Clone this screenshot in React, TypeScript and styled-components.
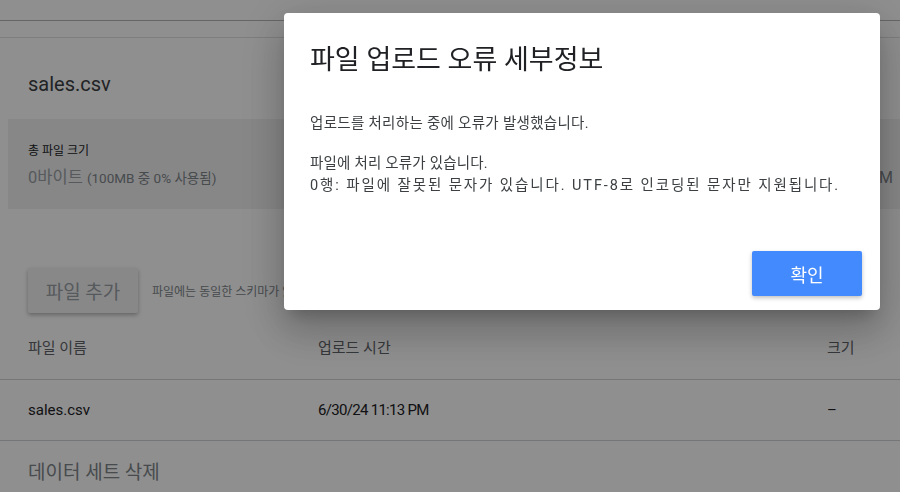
import * as React from "react";
import styled, { createGlobalStyle } from "styled-components";

const GlobalStyle = createGlobalStyle`
  html, body {
    margin: 0;
    padding: 0;
    background: #ffffff;
    font-family: Roboto, "Noto Sans CJK KR", "Noto Sans", sans-serif;
    overflow: hidden;
  }
`;

const App: React.FC = () => {
  return (
    <>
      <GlobalStyle />
      <Page>
        <TopBar />
        <TabStrip />
        <Content>
          <DatasetName>sales.csv</DatasetName>
          <StatCard>
            <StatBlock>
              <StatLabel>총 파일 크기</StatLabel>
              <StatValue>
                0바이트 <StatNote>(100MB 중 0% 사용됨)</StatNote>
              </StatValue>
            </StatBlock>
            <StatTail>M</StatTail>
          </StatCard>
          <AddRow>
            <RaisedButton>파일 추가</RaisedButton>
            <Hint>파일에는 동일한 스키마가 있어야 합니다.</Hint>
          </AddRow>
        </Content>
        <Table>
          <HeadRow>
            <Cell>파일 이름</Cell>
            <Cell>업로드 시간</Cell>
            <Cell>크기</Cell>
          </HeadRow>
          <BodyRow>
            <Cell $dark>sales.csv</Cell>
            <Cell $dark $narrow>6/30/24 11:13 PM</Cell>
            <Cell $dark>–</Cell>
          </BodyRow>
        </Table>
        <DeleteLink>데이터 세트 삭제</DeleteLink>
      </Page>
      <Scrim />
      <Dialog role="dialog" aria-labelledby="dlg-title">
        <DialogTitle id="dlg-title">파일 업로드 오류 세부정보</DialogTitle>
        <DialogBody>
          <Para>
            <Line $tracking={0.3}>업로드를 처리하는 중에 오류가 발생했습니다.</Line>
          </Para>
          <Para>
            <Line $tracking={0.2}>파일에 처리 오류가 있습니다.</Line>
            <Line $tracking={1.9}>
              0행: 파일에 잘못된 문자가 있습니다. UTF-8로 인코딩된 문자만 지원됩니다.
            </Line>
          </Para>
        </DialogBody>
        <DialogActions>
          <PrimaryButton>확인</PrimaryButton>
        </DialogActions>
      </Dialog>
    </>
  );
};

const Page = styled.div`
  width: 900px;
  height: 492px;
  background: #ffffff;
  display: flex;
  flex-direction: column;
`;

const TopBar = styled.div`
  height: 20px;
  border-bottom: 1px solid #b4b6b9;
`;

const TabStrip = styled.div`
  height: 16px;
  border-bottom: 1px solid #e0e0e0;
`;

const Content = styled.div`
  padding: 0 0 0 8px;
  display: flex;
  flex-direction: column;
`;

const DatasetName = styled.div`
  padding: 33px 20px 0;
  height: 81px;
  box-sizing: border-box;
  font-size: 20px;
  line-height: 26px;
  color: #3c4043;
`;

const StatCard = styled.div`
  height: 90px;
  background: #f1f1f2;
  display: flex;
  justify-content: space-between;
  align-items: center;
  padding: 0 7px 0 20px;
`;

const StatBlock = styled.div`
  display: flex;
  flex-direction: column;
  gap: 9px;
  padding-top: 2px;
`;

const StatLabel = styled.div`
  font-size: 12px;
  line-height: 16px;
  color: #202124;
`;

const StatValue = styled.div`
  font-size: 16.5px;
  line-height: 20px;
  color: #9aa0a6;
`;

const StatNote = styled.span`
  font-size: 13.5px;
  color: #80868b;
`;

const StatTail = styled.div`
  font-size: 16px;
  color: #80868b;
  padding-top: 26px;
`;

const AddRow = styled.div`
  display: flex;
  align-items: center;
  gap: 14px;
  padding: 59px 20px 0;
`;

const RaisedButton = styled.button`
  width: 110px;
  height: 45px;
  border: none;
  border-radius: 2px;
  background: #f3f3f3;
  box-shadow: 0 2px 4px rgba(0, 0, 0, 0.3);
  font-family: inherit;
  font-size: 19px;
  color: #9aa0a6;
  padding: 0;
`;

const Hint = styled.div`
  font-size: 12px;
  color: #80868b;
  white-space: nowrap;
`;

const Table = styled.div`
  display: flex;
  flex-direction: column;
`;

const HeadRow = styled.div`
  display: grid;
  grid-template-columns: 290px 509px 1fr;
  height: 66px;
  align-items: center;
  padding: 0 0 0 28px;
  border-bottom: 1px solid #d0d2d4;
`;

const BodyRow = styled(HeadRow)`
  height: 60px;
`;

const Cell = styled.div<{ $dark?: boolean; $narrow?: boolean }>`
  font-size: 15px;
  color: ${({ $dark }) => ($dark ? "#202124" : "#5f6368")};
  letter-spacing: ${({ $narrow }) => ($narrow ? "-0.7px" : "0")};
`;

const DeleteLink = styled.div`
  padding: 16px 28px 0;
  font-size: 19px;
  color: #80868b;
`;

const Scrim = styled.div`
  position: fixed;
  inset: 0;
  background: rgba(0, 0, 0, 0.44);
`;

const Dialog = styled.div`
  position: fixed;
  top: 13px;
  left: 284px;
  width: 596px;
  height: 297px;
  box-sizing: border-box;
  background: #ffffff;
  border-radius: 4px;
  box-shadow: 0 11px 15px -7px rgba(0, 0, 0, 0.2), 0 24px 38px 3px rgba(0, 0, 0, 0.14),
    0 9px 46px 8px rgba(0, 0, 0, 0.12);
  display: flex;
  flex-direction: column;
  padding: 31px 18px 14px 26px;
`;

const DialogTitle = styled.h2`
  margin: 0;
  font-size: 27px;
  line-height: 32px;
  font-weight: 400;
  color: #202124;
`;

const DialogBody = styled.div`
  margin-top: 37px;
  flex: 1;
  display: flex;
  flex-direction: column;
  gap: 18px;
`;

const Para = styled.div`
  display: flex;
  flex-direction: column;
`;

const Line = styled.span<{ $tracking: number }>`
  font-size: 14.5px;
  line-height: 22px;
  color: #3c4043;
  white-space: nowrap;
  letter-spacing: ${({ $tracking }) => $tracking}px;
`;

const DialogActions = styled.div`
  display: flex;
  justify-content: flex-end;
`;

const PrimaryButton = styled.button`
  width: 110px;
  height: 45px;
  border: none;
  border-radius: 2px;
  background: #448aff;
  color: #ffffff;
  font-family: inherit;
  font-size: 18px;
  box-shadow: 0 2px 4px rgba(0, 0, 0, 0.25);
  padding: 0;
`;

export default App;
